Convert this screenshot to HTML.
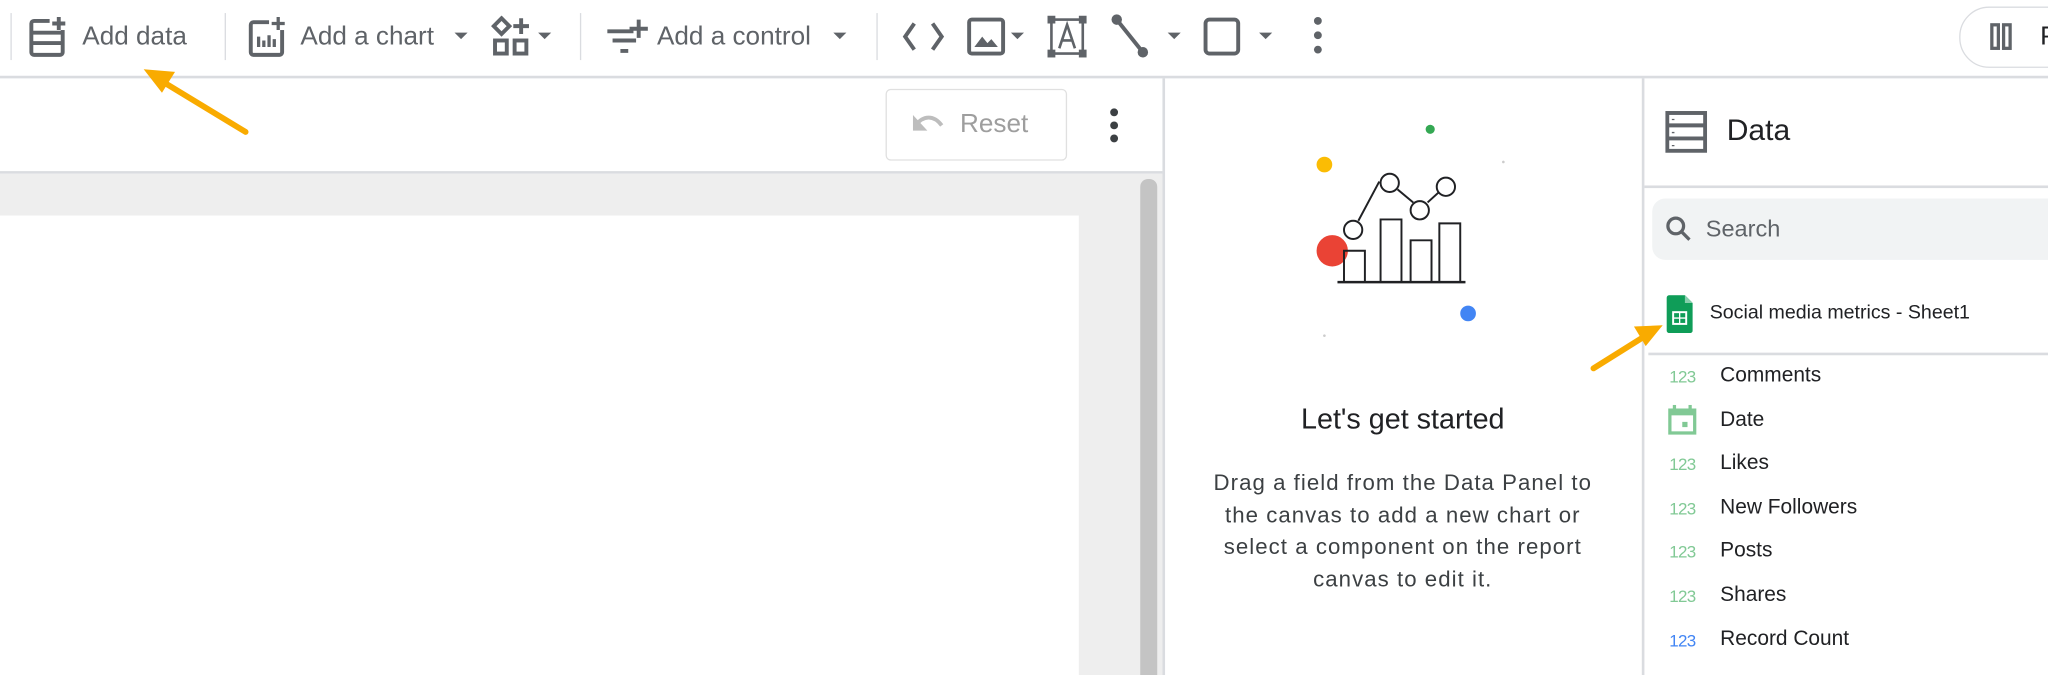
<!DOCTYPE html>
<html><head><meta charset="utf-8"><style>
html,body{margin:0;padding:0;width:2048px;height:675px;overflow:hidden;background:#fff}
#w{position:absolute;left:0;top:0;width:1568px;height:517px;transform:scale(1.30612);transform-origin:0 0;font-family:"Liberation Sans",Arial,sans-serif;color:#202124}
.a{position:absolute}
.t{font-size:20px;color:#5f6368;position:absolute;top:17px;white-space:nowrap}
.sep{position:absolute;top:10px;width:1px;height:36px;background:#dadce0}
.car{position:absolute;top:25px;width:0;height:0;border-left:5px solid transparent;border-right:5px solid transparent;border-top:5px solid #5f6368}
.it{position:absolute;left:1317px;font-size:16px;color:#202124}
.n{position:absolute;left:1278px;font-size:13px;letter-spacing:-0.5px;color:#81c995}
svg{position:absolute}
</style></head><body><div id="w">
<div class="sep" style="left:8px"></div>
<svg style="left:22px;top:12px" width="30" height="32" viewBox="0 0 30 32"><rect x="2" y="4" width="24" height="26" rx="2" fill="none" stroke="#5f6368" stroke-width="3"/><line x1="2" y1="13" x2="26" y2="13" stroke="#5f6368" stroke-width="3"/><line x1="2" y1="21" x2="26" y2="21" stroke="#5f6368" stroke-width="3"/><rect x="16" y="0" width="14" height="11" fill="#fff"/><path d="M23 1v10M18 6h10" stroke="#5f6368" stroke-width="3"/></svg>
<div class="t" style="left:63px">Add data</div>
<div class="sep" style="left:172px"></div>
<svg style="left:190px;top:12px" width="30" height="32" viewBox="0 0 30 32"><rect x="2" y="5" width="24" height="25" rx="2" fill="none" stroke="#5f6368" stroke-width="3"/><rect x="16" y="0" width="14" height="11" fill="#fff"/><path d="M23 1v10M18 6h10M8 24v-8M12 24v-5M16 24v-9M20 24v-6" stroke="#5f6368" stroke-width="2.5"/></svg>
<div class="t" style="left:230px">Add a chart</div>
<div class="car" style="left:348px"></div>
<svg style="left:376px;top:12px" width="32" height="32" viewBox="0 0 32 32"><path d="M8 2l6 6-6 6-6-6z" fill="none" stroke="#5f6368" stroke-width="3"/><path d="M23 2v12M17 8h12" stroke="#5f6368" stroke-width="3"/><rect x="3" y="19" width="9" height="10" fill="none" stroke="#5f6368" stroke-width="3"/><rect x="18" y="19" width="9" height="10" fill="none" stroke="#5f6368" stroke-width="3"/></svg>
<div class="car" style="left:412px"></div>
<div class="sep" style="left:444px"></div>
<svg style="left:463px;top:12px" width="34" height="32" viewBox="0 0 34 32"><path d="M2 12h20M6 19h18M12 27h6M26 3v14M19 10h14" stroke="#5f6368" stroke-width="3"/></svg>
<div class="t" style="left:503px">Add a control</div>
<div class="car" style="left:638px"></div>
<div class="sep" style="left:671px"></div>
<svg style="left:690px;top:15px" width="34" height="26" viewBox="0 0 34 26"><path d="M10 3L3 13l7 10M24 3l7 10-7 10" fill="none" stroke="#5f6368" stroke-width="3"/></svg>
<svg style="left:740px;top:12px" width="30" height="32" viewBox="0 0 30 32"><rect x="2" y="3" width="26" height="26" rx="2" fill="none" stroke="#5f6368" stroke-width="3"/><path d="M6 24l6-8 4 5 3-3 5 6z" fill="#5f6368"/></svg>
<div class="car" style="left:774px"></div>
<svg style="left:802px;top:12px" width="30" height="32" viewBox="0 0 30 32"><rect x="3" y="3" width="24" height="26" fill="none" stroke="#5f6368" stroke-width="2"/><rect x="0" y="0" width="6" height="6" fill="#5f6368"/><rect x="24" y="0" width="6" height="6" fill="#5f6368"/><rect x="0" y="26" width="6" height="6" fill="#5f6368"/><rect x="24" y="26" width="6" height="6" fill="#5f6368"/><path d="M9 25l6-18 6 18M11 19h8" fill="none" stroke="#5f6368" stroke-width="2"/></svg>
<svg style="left:850px;top:10px" width="32" height="36" viewBox="0 0 32 36"><path d="M5 5l20 25" stroke="#5f6368" stroke-width="3"/><circle cx="5" cy="5" r="4" fill="#5f6368"/><circle cx="25" cy="30" r="4" fill="#5f6368"/></svg>
<div class="car" style="left:894px"></div>
<svg style="left:921px;top:12px" width="30" height="32" viewBox="0 0 30 32"><rect x="2" y="3" width="25" height="26" rx="3" fill="none" stroke="#5f6368" stroke-width="3"/></svg>
<div class="car" style="left:964px"></div>
<svg style="left:1004px;top:12px" width="10" height="32" viewBox="0 0 10 32"><circle cx="5" cy="4" r="3" fill="#5f6368"/><circle cx="5" cy="15" r="3" fill="#5f6368"/><circle cx="5" cy="26" r="3" fill="#5f6368"/></svg>
<div class="a" style="left:1500px;top:5px;width:120px;height:45px;border:1px solid #dadce0;border-radius:23px"></div>
<svg style="left:1523px;top:17px" width="18" height="22" viewBox="0 0 18 22"><rect x="2" y="2" width="5" height="18" fill="none" stroke="#5f6368" stroke-width="2.5"/><rect x="11" y="2" width="5" height="18" fill="none" stroke="#5f6368" stroke-width="2.5"/></svg>
<div class="t" style="left:1562px;color:#202124">P</div>
<div class="a" style="left:0;top:58px;width:1568px;height:2px;background:#dadce0"></div>
<div class="a" style="left:678px;top:68px;width:137px;height:53px;border:1px solid #e0e0e0;border-radius:4px"></div>
<svg style="left:697px;top:84px" width="26" height="20" viewBox="0 0 26 20"><path d="M4 12c6-8 14-8 20 0" fill="none" stroke="#bdbdbd" stroke-width="3"/><path d="M2 4v12h11z" fill="#bdbdbd"/></svg>
<div class="a" style="left:735px;top:84px;font-size:20px;color:#9e9e9e">Reset</div>
<svg style="left:848px;top:82px" width="10" height="30" viewBox="0 0 10 30"><circle cx="5" cy="4" r="3" fill="#3c4043"/><circle cx="5" cy="14" r="3" fill="#3c4043"/><circle cx="5" cy="24" r="3" fill="#3c4043"/></svg>
<div class="a" style="left:0;top:131px;width:890px;height:2px;background:#dadce0"></div>
<div class="a" style="left:0;top:133px;width:890px;height:384px;background:#eeeeee"></div>
<div class="a" style="left:0;top:165px;width:826px;height:352px;background:#fff"></div>
<div class="a" style="left:873px;top:137px;width:13px;height:380px;background:#c4c4c4;border-radius:6px 6px 0 0"></div>
<div class="a" style="left:890px;top:60px;width:2px;height:457px;background:#dadce0"></div>
<svg style="left:980px;top:90px" width="180" height="175" viewBox="980 90 180 175">
<circle cx="1095" cy="99" r="3.5" fill="#34a853"/><circle cx="1014" cy="126" r="6" fill="#fbbc04"/><circle cx="1020" cy="192" r="12" fill="#ea4335"/><circle cx="1124" cy="240" r="6" fill="#4285f4"/>
<g fill="none" stroke="#202124" stroke-width="1.5"><path d="M1029 216v-24h16v24M1057 216v-48h16v48M1080 216v-32h16v32M1102 216v-45h16v45"/><path d="M1024 216h98" stroke-width="2"/><path d="M1040 169l16-30M1070 145l12 10M1093 155l11-10"/><circle cx="1036" cy="176" r="7" fill="#fff"/><circle cx="1064" cy="140" r="7" fill="#fff"/><circle cx="1087" cy="161" r="7" fill="#fff"/><circle cx="1107" cy="143" r="7" fill="#fff"/></g>
<circle cx="1151" cy="124" r="1" fill="#ccc"/><circle cx="1014" cy="257" r="1" fill="#ccc"/>
</svg>
<div class="a" style="left:891px;top:308px;width:366px;text-align:center;font-size:22px;color:#202124">Let's get started</div>
<div class="a" style="left:891px;top:358px;width:366px;text-align:center;font-size:17px;line-height:24.5px;color:#3c4043;letter-spacing:0.8px;white-space:nowrap">Drag a field from the Data Panel to<br>the canvas to add a new chart or<br>select a component on the report<br>canvas to edit it.</div>
<div class="a" style="left:1257px;top:60px;width:2px;height:457px;background:#dadce0"></div>
<svg style="left:1275px;top:85px" width="32" height="32" viewBox="0 0 32 32"><rect x="1.5" y="1.5" width="29" height="29" fill="none" stroke="#5f6368" stroke-width="3"/><path d="M1 11h30M1 21h30" stroke="#5f6368" stroke-width="3"/><path d="M6 6v1M6 16v1M6 26v1" stroke="#5f6368" stroke-width="2"/></svg>
<div class="a" style="left:1322px;top:86px;font-size:23px;color:#202124">Data</div>
<div class="a" style="left:1259px;top:142px;width:309px;height:2px;background:#dadce0"></div>
<div class="a" style="left:1265px;top:152px;width:320px;height:47px;background:#f1f3f4;border-radius:10px"></div>
<svg style="left:1274px;top:164px" width="24" height="24" viewBox="0 0 24 24"><circle cx="9" cy="9" r="6" fill="none" stroke="#5f6368" stroke-width="2.5"/><path d="M13.5 13.5l6 6" stroke="#5f6368" stroke-width="2.5"/></svg>
<div class="a" style="left:1306px;top:165px;font-size:18px;color:#5f6368">Search</div>
<svg style="left:1276px;top:226px" width="20" height="29" viewBox="0 0 20 29"><path d="M2 0h12l6 6v21a2 2 0 0 1-2 2H2a2 2 0 0 1-2-2V2a2 2 0 0 1 2-2z" fill="#0f9d58"/><path d="M14 0v6h6z" fill="#87ceac"/><rect x="5" y="13" width="10" height="9" fill="none" stroke="#fff" stroke-width="1.5"/><path d="M5 17.5h10M10 13v9" stroke="#fff" stroke-width="1"/></svg>
<div class="a" style="left:1309px;top:231px;font-size:15px;color:#202124">Social media metrics - Sheet1</div>
<div class="a" style="left:1262px;top:270px;width:306px;height:2px;background:#dadce0"></div>
<div class="n" style="top:281px">123</div><div class="it" style="top:279px">Comments</div>
<svg style="left:1277px;top:310px" width="22" height="23" viewBox="0 0 22 23"><rect x="1.5" y="4" width="19" height="17.5" fill="none" stroke="#81c995" stroke-width="2.5"/><rect x="1" y="3" width="20" height="5" fill="#81c995"/><path d="M5 0v5M17 0v5" stroke="#81c995" stroke-width="2.5"/><rect x="11" y="13" width="4" height="4" fill="#81c995"/></svg>
<div class="it" style="top:313px">Date</div>
<div class="n" style="top:348px">123</div><div class="it" style="top:346px">Likes</div>
<div class="n" style="top:382px">123</div><div class="it" style="top:380px">New Followers</div>
<div class="n" style="top:415px">123</div><div class="it" style="top:413px">Posts</div>
<div class="n" style="top:449px">123</div><div class="it" style="top:447px">Shares</div>
<div class="n" style="top:483px;color:#4285f4">123</div><div class="it" style="top:481px">Record Count</div>
<svg style="left:0;top:0" width="1568" height="517" viewBox="0 0 1568 517"><path d="M188 101L122 61" stroke="#f9ab00" stroke-width="4.5" stroke-linecap="round"/><path d="M110 53l24 2-10 16z" fill="#f9ab00"/><path d="M1220 282L1260 257" stroke="#f9ab00" stroke-width="4.5" stroke-linecap="round"/><path d="M1273 249l-22 1 9 15z" fill="#f9ab00"/></svg>
</div></body></html>
